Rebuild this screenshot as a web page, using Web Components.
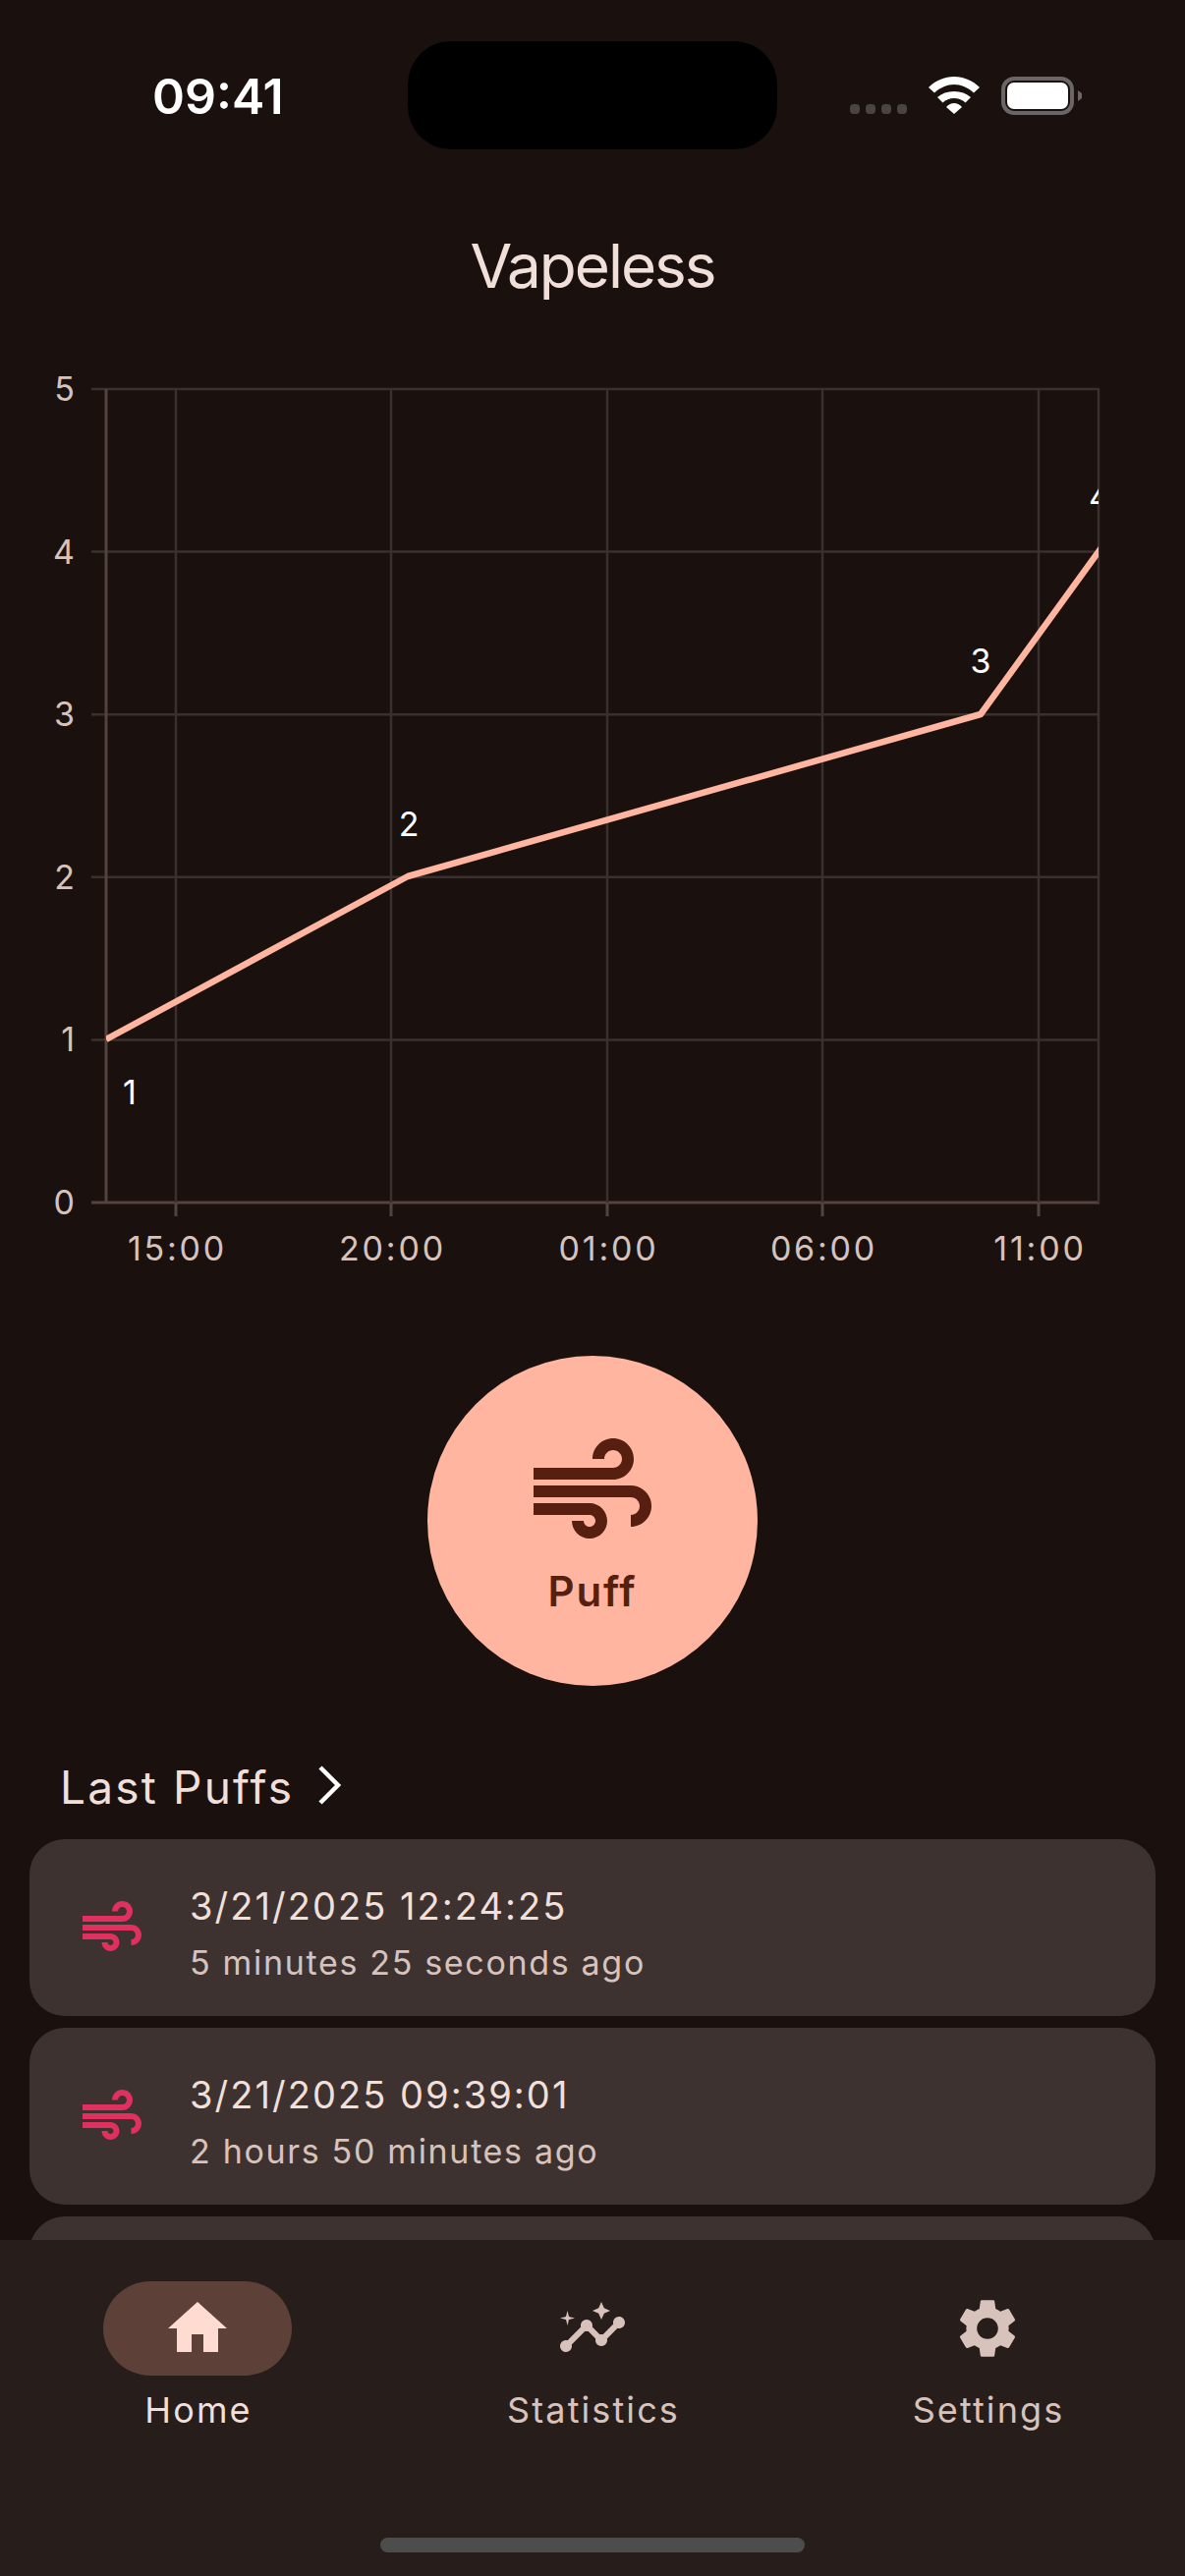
<!DOCTYPE html>
<html lang="en">
<head>
<meta charset="utf-8">
<title>Vapeless</title>
<style>
    html, body { margin: 0; padding: 0; background: #1a110f; }
    body { font-family: Inter, Roboto, sans-serif; }
</style>
</head>
<body>
<vape-app>
    <status-bar></status-bar>
    <app-title>Vapeless</app-title>
    <puff-chart></puff-chart>
    <puff-button></puff-button>
    <last-puffs>
        <puff-card when="3/21/2025 12:24:25" ago="5 minutes 25 seconds ago"></puff-card>
        <puff-card when="3/21/2025 09:39:01" ago="2 hours 50 minutes ago"></puff-card>
        <puff-card></puff-card>
    </last-puffs>
    <nav-bar></nav-bar>
</vape-app>

<script>
// Material icon paths, all on a 24 unit box
const ICONS = {
    air: 'M14.5 17c0 1.65-1.35 3-3 3s-3-1.35-3-3h2c0 .55.45 1 1 1s1-.45 1-1-.45-1-1-1H2v-2h9.5c1.65 0 3 1.35 3 3zM19 6.5C19 4.57 17.43 3 15.5 3S12 4.57 12 6.5h2c0-.83.67-1.5 1.5-1.5s1.5.67 1.5 1.5S16.33 8 15.5 8H2v2h13.5c1.93 0 3.5-1.57 3.5-3.5zm-.5 4.5H2v2h16.5c.83 0 1.5.67 1.5 1.5s-.67 1.5-1.5 1.5v2c1.93 0 3.5-1.57 3.5-3.5S20.43 11 18.5 11z',
    home: 'M10 20v-6h4v6h5v-8h3L12 3 2 12h3v8z',
    insights: 'M21 8c-1.45 0-2.26 1.44-1.93 2.51l-3.55 3.56c-.3-.09-.74-.09-1.04 0l-2.55-2.55C12.27 10.45 11.46 9 10 9c-1.45 0-2.27 1.44-1.93 2.52l-4.56 4.55C2.44 15.74 1 16.55 1 18c0 1.1.9 2 2 2 1.45 0 2.26-1.44 1.93-2.51l4.55-4.56c.3.09.74.09 1.04 0l2.55 2.55C12.73 16.55 13.54 18 15 18c1.45 0 2.27-1.44 1.93-2.52l3.56-3.55c1.07.33 2.51-.48 2.51-1.93 0-1.1-.9-2-2-2zM15 9l.94-2.07L18 6l-2.06-.93L15 3l-.92 2.07L12 6l2.08.93zM3.5 11L4 9l2-.5L4 8l-.5-2L3 8l-2 .5L3 9z',
    settings: 'M19.14 12.94c.04-.3.06-.61.06-.94 0-.32-.02-.64-.07-.94l2.03-1.58c.18-.14.23-.41.12-.61l-1.92-3.32c-.12-.22-.37-.29-.59-.22l-2.39.96c-.5-.38-1.03-.7-1.62-.94l-.36-2.54c-.04-.24-.24-.41-.48-.41h-3.84c-.24 0-.43.17-.47.41l-.36 2.54c-.59.24-1.13.57-1.62.94l-2.39-.96c-.22-.08-.47 0-.59.22L2.74 8.87c-.12.21-.08.47.12.61l2.03 1.58c-.05.3-.09.63-.09.94s.02.64.07.94l-2.03 1.58c-.18.14-.23.41-.12.61l1.92 3.32c.12.22.37.29.59.22l2.39-.96c.5.38 1.03.7 1.62.94l.36 2.54c.05.24.24.41.48.41h3.84c.24 0 .44-.17.47-.41l.36-2.54c.59-.24 1.13-.56 1.62-.94l2.39.96c.22.08.47 0 .59-.22l1.92-3.32c.12-.22.07-.47-.12-.61l-2.01-1.58zM12 15.6c-1.98 0-3.6-1.62-3.6-3.6s1.62-3.6 3.6-3.6 3.6 1.62 3.6 3.6-1.62 3.6-3.6 3.6z'
};

const icon = (name, size, color) =>
    `<svg width="${size}" height="${size}" viewBox="0 0 24 24" style="display:block"><path fill="${color}" d="${ICONS[name]}"/></svg>`;

class VapeApp extends HTMLElement {
    constructor() {
        super();
        this.attachShadow({ mode: 'open' }).innerHTML = `
            <style>
                :host { display: flex; flex-direction: column; width: 1206px; height: 2622px; overflow: hidden; background: #1a110f; }
            </style>
            <slot></slot>
        `;
    }
}

class StatusBar extends HTMLElement {
    constructor() {
        super();
        this.attachShadow({ mode: 'open' }).innerHTML = `
            <style>
                :host { display: flex; align-items: flex-start; height: 227px; box-sizing: border-box; padding-top: 42px; }
                .time { width: 415px; box-sizing: border-box; padding: 29px 0 0 155px; font: 600 50px/54px Inter, Roboto, sans-serif; color: #fff; }
                .island { width: 376px; height: 110px; border-radius: 44px; background: #000; }
                .icons { display: flex; align-items: flex-start; padding: 36px 0 0 74px; }
                .dots { display: flex; gap: 6px; margin-top: 28px; }
                .dots i { width: 10px; height: 10px; border-radius: 4px; background: #4a4443; }
                svg { display: block; }
                .wifi { margin-left: 22px; }
                .battery { margin-left: 22px; }
            </style>
            <div class="time">09:41</div>
            <div class="island"></div>
            <div class="icons">
                <div class="dots"><i></i><i></i><i></i><i></i></div>
                <svg class="wifi" width="52" height="38" viewBox="0 0 52 38">
                    <path fill="#fff" d="M26 0C16 0 7 4 0 11L6 16.500C12 11 19 8 26 8S40 11 46 16.500L52 11C45 4 36 0 26 0z"/>
                    <path fill="#fff" d="M26 15C19 15 13.500 17 9 21L14.500 26.500C17.500 23.500 21.500 22 26 22S34.500 23.500 37.500 26.500L43 21C38.500 17 33 15 26 15z"/>
                    <path fill="#fff" d="M26 27C23 27 20.500 28.200 18 31L26 38L34 31C31.500 28.200 29 27 26 27z"/>
                </svg>
                <svg class="battery" width="82" height="39" viewBox="0 0 82 39">
                    <rect x="2" y="2" width="70" height="35" rx="11" fill="none" stroke="#6b6665" stroke-width="4"/>
                    <rect x="6" y="6" width="62" height="27" rx="7" fill="#fff"/>
                    <path fill="#6b6665" d="M78 14l4 3v5l-4 3z"/>
                </svg>
            </div>
        `;
    }
}

class AppTitle extends HTMLElement {
    constructor() {
        super();
        this.attachShadow({ mode: 'open' }).innerHTML = `
            <style>
                :host { display: block; height: 129px; text-align: center; font: 400 62px/88px Inter, Roboto, sans-serif; letter-spacing: -2px; color: #f1dfda; }
            </style>
            <slot></slot>
        `;
    }
}

class PuffChart extends HTMLElement {
    constructor() {
        super();
        const left = 108, right = 1118, top = 396, bottom = 1224;
        const yAt = v => bottom - v * (bottom - top) / 5;
        const xTicks = [[179, '15:00'], [398, '20:00'], [618, '01:00'], [837, '06:00'], [1057, '11:00']];
        const offsetY = 356; // svg starts here on the page

        let grid = '', labels = '';
        for (let v = 0; v <= 5; v++) {
            grid += `<line x1="93" x2="${right + 1}" y1="${yAt(v)}" y2="${yAt(v)}" stroke="${v === 0 ? '#53433f' : '#3a302e'}" stroke-width="${v === 0 ? 3 : 2.500}"/>`;
            labels += `<text class="axis" x="76" y="${yAt(v) + 12}" text-anchor="end">${v}</text>`;
        }
        for (const [x, t] of xTicks) {
            grid += `<line x1="${x}" x2="${x}" y1="${top}" y2="${bottom}" stroke="#3a302e" stroke-width="2.500"/>`;
            grid += `<line x1="${x}" x2="${x}" y1="${bottom}" y2="1238" stroke="#53433f" stroke-width="3"/>`;
            labels += `<text class="axis spaced" x="${x + 1.500}" y="1283" text-anchor="middle">${t}</text>`;
        }

        this.attachShadow({ mode: 'open' }).innerHTML = `
            <style>
                :host { display: block; height: 954px; }
                svg { display: block; }
                text { font-family: Inter, Roboto, sans-serif; font-size: 34px; }
                .axis { fill: #d8c2bc; }
                .spaced { letter-spacing: 2.800px; }
                .value { fill: #fff; }
            </style>
            <svg width="1206" height="954" viewBox="0 ${offsetY} 1206 954">
                <defs><clipPath id="plot"><rect x="${left}" y="${top}" width="${right - left}" height="${bottom - top}"/></clipPath></defs>
                ${grid}
                <line x1="${right}" x2="${right}" y1="${top}" y2="${bottom}" stroke="#3a302e" stroke-width="2.500"/>
                <line x1="${left}" x2="${left}" y1="${top}" y2="${bottom}" stroke="#53433f" stroke-width="3"/>
                ${labels}
                <g clip-path="url(#plot)">
                    <polyline points="108,1058 415,892 998,727 1130,545" fill="none" stroke="#ffb5a0" stroke-width="6.500" stroke-linejoin="round"/>
                    <text class="value" x="132" y="1124" text-anchor="middle">1</text>
                    <text class="value" x="416" y="851" text-anchor="middle">2</text>
                    <text class="value" x="998" y="685" text-anchor="middle">3</text>
                    <text class="value" x="1119" y="518" text-anchor="middle">4</text>
                </g>
            </svg>
        `;
    }
}

class PuffButton extends HTMLElement {
    constructor() {
        super();
        this.attachShadow({ mode: 'open' }).innerHTML = `
            <style>
                :host { display: flex; justify-content: center; padding-top: 70px; }
                .circle { width: 336px; height: 336px; border-radius: 50%; background: #ffb5a0; display: flex; flex-direction: column; align-items: center; box-sizing: border-box; padding-top: 66px; color: #561f0f; }
                .label { margin-top: 2px; font: 600 42px/56px Inter, Roboto, sans-serif; letter-spacing: 1.800px; }
            </style>
            <div class="circle">
                ${icon('air', 144, '#561f0f')}
                <div class="label">Puff</div>
            </div>
        `;
    }
}

class LastPuffs extends HTMLElement {
    constructor() {
        super();
        this.attachShadow({ mode: 'open' }).innerHTML = `
            <style>
                :host { display: flex; flex-direction: column; flex: 1; min-height: 0; overflow: hidden; padding-top: 64px; }
                .head { display: flex; align-items: center; height: 60px; padding: 9px 0 0 61px; margin-bottom: -9px; gap: 23px; font: 400 46px/60px Inter, Roboto, sans-serif; letter-spacing: 2.200px; color: #f1dfda; }
                .list { display: flex; flex-direction: column; gap: 12px; padding: 32px 30px 0; }
            </style>
            <div class="head">
                <span>Last Puffs</span>
                <svg width="26" height="42" viewBox="0 0 26 42" style="display:block;margin-top:-4px"><path d="M4 3l18 18L4 39" fill="none" stroke="#fff" stroke-width="4.500"/></svg>
            </div>
            <div class="list"><slot></slot></div>
        `;
    }
}

class PuffCard extends HTMLElement {
    constructor() {
        super();
        const when = this.getAttribute('when');
        const ago = this.getAttribute('ago');
        this.attachShadow({ mode: 'open' }).innerHTML = `
            <style>
                :host { display: flex; align-items: center; flex: none; height: 180px; border-radius: 36px; background: #3d3230; box-sizing: border-box; padding-left: 48px; }
                .text { margin-left: 43px; padding-top: 12px; }
                .when { font: 400 38px/50px Inter, Roboto, sans-serif; letter-spacing: 2.050px; color: #f1dfda; }
                .ago { margin-top: 10px; font: 400 34px/46px Inter, Roboto, sans-serif; letter-spacing: 1.670px; color: #d8c2bc; }
            </style>
            ${when ? `
                ${icon('air', 72, '#e0305f')}
                <div class="text">
                    <div class="when">${when}</div>
                    <div class="ago">${ago}</div>
                </div>` : ''}
        `;
    }
}

class NavBar extends HTMLElement {
    constructor() {
        super();
        const item = (name, label, active) => `
            <div class="item ${active ? 'active' : ''}">
                <div class="pill">${icon(name, 72, active ? '#ffdbd1' : '#d8c2bc')}</div>
                <div class="label">${label}</div>
            </div>`;
        this.attachShadow({ mode: 'open' }).innerHTML = `
            <style>
                :host { display: block; flex: none; height: 342px; background: #271d1b; position: relative; }
                .row { display: grid; grid-template-columns: repeat(3, 402px); padding-top: 42px; }
                .item { display: flex; flex-direction: column; align-items: center; }
                .pill { width: 192px; height: 96px; border-radius: 48px; display: flex; align-items: center; justify-content: center; }
                .active .pill { background: #5d4037; }
                .label { margin-top: 11px; padding-left: 2px; font: 400 36px/48px Inter, Roboto, sans-serif; letter-spacing: 2.100px; color: #d8c2bc; }
                .active .label { color: #f1dfda; }
                .bar { position: absolute; left: 387px; bottom: 24px; width: 432px; height: 15px; border-radius: 8px; background: #4d4d4d; }
            </style>
            <div class="row">
                ${item('home', 'Home', true)}
                ${item('insights', 'Statistics', false)}
                ${item('settings', 'Settings', false)}
            </div>
            <div class="bar"></div>
        `;
    }
}

customElements.define('vape-app', VapeApp);
customElements.define('status-bar', StatusBar);
customElements.define('app-title', AppTitle);
customElements.define('puff-chart', PuffChart);
customElements.define('puff-button', PuffButton);
customElements.define('last-puffs', LastPuffs);
customElements.define('puff-card', PuffCard);
customElements.define('nav-bar', NavBar);
</script>
</body>
</html>
